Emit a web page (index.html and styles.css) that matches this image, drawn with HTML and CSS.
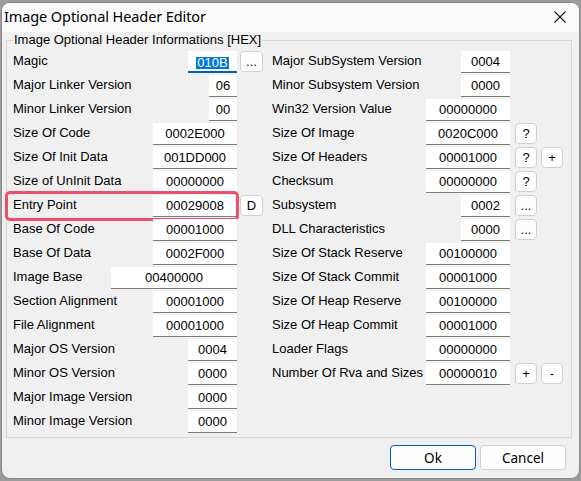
FILE: index.html
```html
<!DOCTYPE html>
<html>
<head>
<meta charset="utf-8">
<link rel="stylesheet" href="styles.css">
</head>
<body>
<div class="window">
  <div class="titlebar">
    <span class="title">Image Optional Header Editor</span>
    <span class="close"><svg width="12" height="12" viewBox="0 0 12 12"><path d="M0.5 0.5 L11.5 11.5 M11.5 0.5 L0.5 11.5" stroke="#1a1a1a" stroke-width="1.1" fill="none"/></svg></span>
  </div>
  <div class="content">
    <fieldset class="group">
      <legend>Image Optional Header Informations [HEX]</legend>
      <div class="cols">
        <div class="col left">
          <div class="row"><span class="lbl">Magic</span><span class="fld w4 focus"><span class="sel">010B</span></span><span class="slot"><span class="btn-s">...</span></span></div>
          <div class="row"><span class="lbl">Major Linker Version</span><span class="fld w2">06</span><span class="slot"></span></div>
          <div class="row"><span class="lbl">Minor Linker Version</span><span class="fld w2">00</span><span class="slot"></span></div>
          <div class="row"><span class="lbl">Size Of Code</span><span class="fld w8">0002E000</span><span class="slot"></span></div>
          <div class="row"><span class="lbl">Size Of Init Data</span><span class="fld w8">001DD000</span><span class="slot"></span></div>
          <div class="row"><span class="lbl">Size of UnInit Data</span><span class="fld w8">00000000</span><span class="slot"></span></div>
          <div class="row mark"><span class="lbl">Entry Point</span><span class="fld w8">00029008</span><span class="slot"><span class="btn-s">D</span></span></div>
          <div class="row"><span class="lbl">Base Of Code</span><span class="fld w8">00001000</span><span class="slot"></span></div>
          <div class="row"><span class="lbl">Base Of Data</span><span class="fld w8">0002F000</span><span class="slot"></span></div>
          <div class="row"><span class="lbl">Image Base</span><span class="fld wide">00400000</span><span class="slot"></span></div>
          <div class="row"><span class="lbl">Section Alignment</span><span class="fld w8">00001000</span><span class="slot"></span></div>
          <div class="row"><span class="lbl">File Alignment</span><span class="fld w8">00001000</span><span class="slot"></span></div>
          <div class="row"><span class="lbl">Major OS Version</span><span class="fld w4">0004</span><span class="slot"></span></div>
          <div class="row"><span class="lbl">Minor OS Version</span><span class="fld w4">0000</span><span class="slot"></span></div>
          <div class="row"><span class="lbl">Major Image Version</span><span class="fld w4">0000</span><span class="slot"></span></div>
          <div class="row"><span class="lbl">Minor Image Version</span><span class="fld w4">0000</span><span class="slot"></span></div>
        </div>
        <div class="col right">
          <div class="row"><span class="lbl">Major SubSystem Version</span><span class="fld w4">0004</span><span class="slot"></span></div>
          <div class="row"><span class="lbl">Minor Subsystem Version</span><span class="fld w4">0000</span><span class="slot"></span></div>
          <div class="row"><span class="lbl">Win32 Version Value</span><span class="fld w8">00000000</span><span class="slot"></span></div>
          <div class="row"><span class="lbl">Size Of Image</span><span class="fld w8">0020C000</span><span class="slot"><span class="btn-s">?</span></span></div>
          <div class="row"><span class="lbl">Size Of Headers</span><span class="fld w8">00001000</span><span class="slot"><span class="btn-s">?</span><span class="btn-s">+</span></span></div>
          <div class="row"><span class="lbl">Checksum</span><span class="fld w8">00000000</span><span class="slot"><span class="btn-s">?</span></span></div>
          <div class="row"><span class="lbl">Subsystem</span><span class="fld w4">0002</span><span class="slot"><span class="btn-s">...</span></span></div>
          <div class="row"><span class="lbl">DLL Characteristics</span><span class="fld w4">0000</span><span class="slot"><span class="btn-s">...</span></span></div>
          <div class="row"><span class="lbl">Size Of Stack Reserve</span><span class="fld w8">00100000</span><span class="slot"></span></div>
          <div class="row"><span class="lbl">Size Of Stack Commit</span><span class="fld w8">00001000</span><span class="slot"></span></div>
          <div class="row"><span class="lbl">Size Of Heap Reserve</span><span class="fld w8">00100000</span><span class="slot"></span></div>
          <div class="row"><span class="lbl">Size Of Heap Commit</span><span class="fld w8">00001000</span><span class="slot"></span></div>
          <div class="row"><span class="lbl">Loader Flags</span><span class="fld w8">00000000</span><span class="slot"></span></div>
          <div class="row"><span class="lbl">Number Of Rva and Sizes</span><span class="fld w8">00000010</span><span class="slot"><span class="btn-s">+</span><span class="btn-s">-</span></span></div>
        </div>
      </div>
    </fieldset>
    <div class="actions">
      <button class="btn primary">Ok</button>
      <button class="btn">Cancel</button>
    </div>
  </div>
</div>
</body>
</html>
```
FILE: styles.css
```css
html, body {
  margin: 0;
  padding: 0;
}
body {
  width: 581px;
  height: 481px;
  background: #9c9c9c;
  overflow: hidden;
  font-family: "Liberation Sans", Arial, sans-serif;
  font-size: 13px;
  color: #000;
}
.window {
  margin: 3px 0 0 2px;
  width: 577px;
  height: 475px;
  background: #f0f0f0;
  border-radius: 8px;
  overflow: hidden;
  box-shadow: 0 0 0 1px #8a8a8a;
}
.titlebar {
  height: 29px;
  background: #fafafa;
  display: flex;
  align-items: center;
  justify-content: space-between;
  padding: 0 13px 0 2px;
  box-sizing: border-box;
}
.title {
  font-family: "Noto Sans", "Open Sans", sans-serif;
  font-size: 14.5px;
  color: #000;
  letter-spacing: -0.1px;
  margin-top: -3px;
}
.close {
  display: flex;
  width: 12px;
  height: 12px;
  margin-top: -1px;
}
.content {
  padding: 0 7px 0 4px;
}
.group {
  margin: 0;
  padding: 2px 7px 3px 6px;
  border: 1px solid #d6d6d6;
  border-radius: 0;
  min-width: 0;
}
.group legend {
  padding: 0 1px;
  margin-left: 0;
  line-height: 16px;
  font-size: 13px;
}
.cols {
  display: flex;
  gap: 9px;
}
.col.left {
  width: 250px;
}
.col.right {
  width: 292px;
}
.row {
  height: 24px;
  display: flex;
  align-items: flex-start;
  position: relative;
}
.lbl {
  flex: 1;
  line-height: 22px;
  white-space: nowrap;
}
.fld {
  margin-top: 1px;
  height: 21px;
  background: #fff;
  border-bottom: 1px solid #7d7d7d;
  text-align: center;
  line-height: 22px;
  flex: none;
}
.fld.w2 { width: 28px; }
.fld.w4 { width: 49px; }
.fld.w8 { width: 84px; }
.fld.wide { width: 126px; }
.fld.focus {
  height: 20px;
  border-bottom: 2px solid #005fb8;
}
.sel {
  background: #0078d7;
  color: #fff;
  padding: 0 1px;
  line-height: 12px;
  display: inline-block;
  margin-top: 6px;
}
.slot {
  flex: none;
  display: flex;
  gap: 4px;
}
.left .slot {
  width: 23px;
  padding-left: 3px;
}
.right .slot {
  width: 49px;
  padding-left: 5px;
}
.btn-s {
  margin-top: 1px;
  width: 20px;
  height: 19px;
  border: 1px solid #d0d0d0;
  border-radius: 4px;
  background: #fdfdfd;
  display: flex;
  align-items: center;
  justify-content: center;
  font-size: 13px;
  line-height: 19px;
}
.left .btn-s {
  width: 21px;
}
.row.mark::after {
  content: "";
  position: absolute;
  left: -8px;
  right: 24px;
  top: -3px;
  bottom: -3px;
  border: 3px solid #ee4f6b;
  border-radius: 5px;
  pointer-events: none;
}
.actions {
  display: flex;
  justify-content: flex-end;
  gap: 4px;
  padding: 7px 6px 0 0;
}
.btn {
  width: 86px;
  height: 25px;
  border: 1px solid #d0d0d0;
  border-radius: 4px;
  background: #fdfdfd;
  font-family: "Noto Sans", "Open Sans", sans-serif;
  font-size: 13.5px;
  color: #000;
  padding: 0;
  line-height: 22px;
}
.btn.primary {
  border-color: #005fb8;
}
```
